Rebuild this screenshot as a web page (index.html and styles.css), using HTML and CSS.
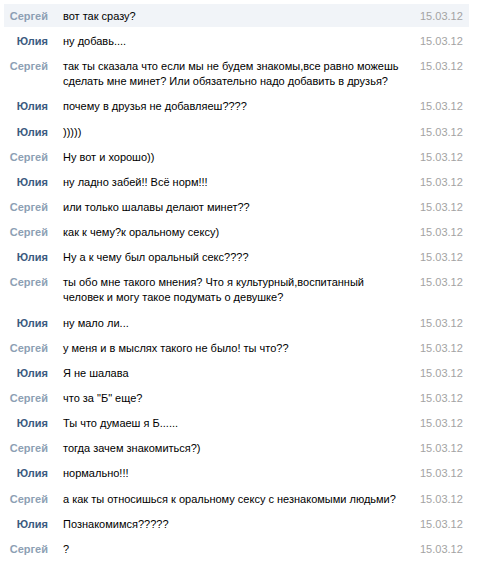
FILE: index.html
```html
<!DOCTYPE html>
<html lang="ru">
<head>
<meta charset="utf-8">
<link rel="stylesheet" href="styles.css">
</head>
<body>
<div class="log">
  <div class="row hl"><div class="name s">Сергей</div><div class="msg">вот так сразу?</div><div class="date">15.03.12</div></div>
  <div class="row"><div class="name j">Юлия</div><div class="msg">ну добавь....</div><div class="date">15.03.12</div></div>
  <div class="row"><div class="name s">Сергей</div><div class="msg">так ты сказала что если мы не будем знакомы,все равно можешь сделать мне минет? Или обязательно надо добавить в друзья?</div><div class="date">15.03.12</div></div>
  <div class="row"><div class="name j">Юлия</div><div class="msg">почему в друзья не добавляеш????</div><div class="date">15.03.12</div></div>
  <div class="row"><div class="name j">Юлия</div><div class="msg">)))))</div><div class="date">15.03.12</div></div>
  <div class="row"><div class="name s">Сергей</div><div class="msg">Ну вот и хорошо))</div><div class="date">15.03.12</div></div>
  <div class="row"><div class="name j">Юлия</div><div class="msg">ну ладно забей!! Всё норм!!!</div><div class="date">15.03.12</div></div>
  <div class="row"><div class="name s">Сергей</div><div class="msg">или только шалавы делают минет??</div><div class="date">15.03.12</div></div>
  <div class="row"><div class="name s">Сергей</div><div class="msg">как к чему?к оральному сексу)</div><div class="date">15.03.12</div></div>
  <div class="row"><div class="name j">Юлия</div><div class="msg">Ну а к чему был оральный секс????</div><div class="date">15.03.12</div></div>
  <div class="row"><div class="name s">Сергей</div><div class="msg">ты обо мне такого мнения? Что я культурный,воспитанный человек и могу такое подумать о девушке?</div><div class="date">15.03.12</div></div>
  <div class="row"><div class="name j">Юлия</div><div class="msg">ну мало ли...</div><div class="date">15.03.12</div></div>
  <div class="row"><div class="name s">Сергей</div><div class="msg">у меня и в мыслях такого не было! ты что??</div><div class="date">15.03.12</div></div>
  <div class="row"><div class="name j">Юлия</div><div class="msg">Я не шалава</div><div class="date">15.03.12</div></div>
  <div class="row"><div class="name s">Сергей</div><div class="msg">что за "Б" еще?</div><div class="date">15.03.12</div></div>
  <div class="row"><div class="name j">Юлия</div><div class="msg">Ты что думаеш я Б......</div><div class="date">15.03.12</div></div>
  <div class="row"><div class="name s">Сергей</div><div class="msg">тогда зачем знакомиться?)</div><div class="date">15.03.12</div></div>
  <div class="row"><div class="name j">Юлия</div><div class="msg">нормально!!!</div><div class="date">15.03.12</div></div>
  <div class="row"><div class="name s">Сергей</div><div class="msg">а как ты относишься к оральному сексу с незнакомыми людьми?</div><div class="date">15.03.12</div></div>
  <div class="row"><div class="name j">Юлия</div><div class="msg">Познакомимся?????</div><div class="date">15.03.12</div></div>
  <div class="row"><div class="name s">Сергей</div><div class="msg">?</div><div class="date">15.03.12</div></div>
</div>
</body>
</html>
```
FILE: styles.css
```css
html, body {
  margin: 0;
  padding: 0;
  background: #ffffff;
}
body {
  font-family: "Liberation Sans", Arial, sans-serif;
  font-size: 11px;
  line-height: 15px;
  color: #000000;
}
.log {
  display: flex;
  flex-direction: column;
  gap: 2.15px;
  padding: 4px 12px 0 4px;
}
.row {
  display: flex;
  align-items: flex-start;
  padding: 5px 0 3px 0;
}
.row.hl {
  background: #f1f4f8;
}
.name {
  width: 44px;
  text-align: right;
  font-weight: bold;
  flex: none;
}
.name.s { color: #8d9fb4; }
.name.j { color: #3b5b80; }
.msg {
  flex: 1;
  margin-left: 15px;
  padding-right: 17px;
}
.date {
  flex: none;
  width: 49px;
  color: #a3a3a3;
}
```
